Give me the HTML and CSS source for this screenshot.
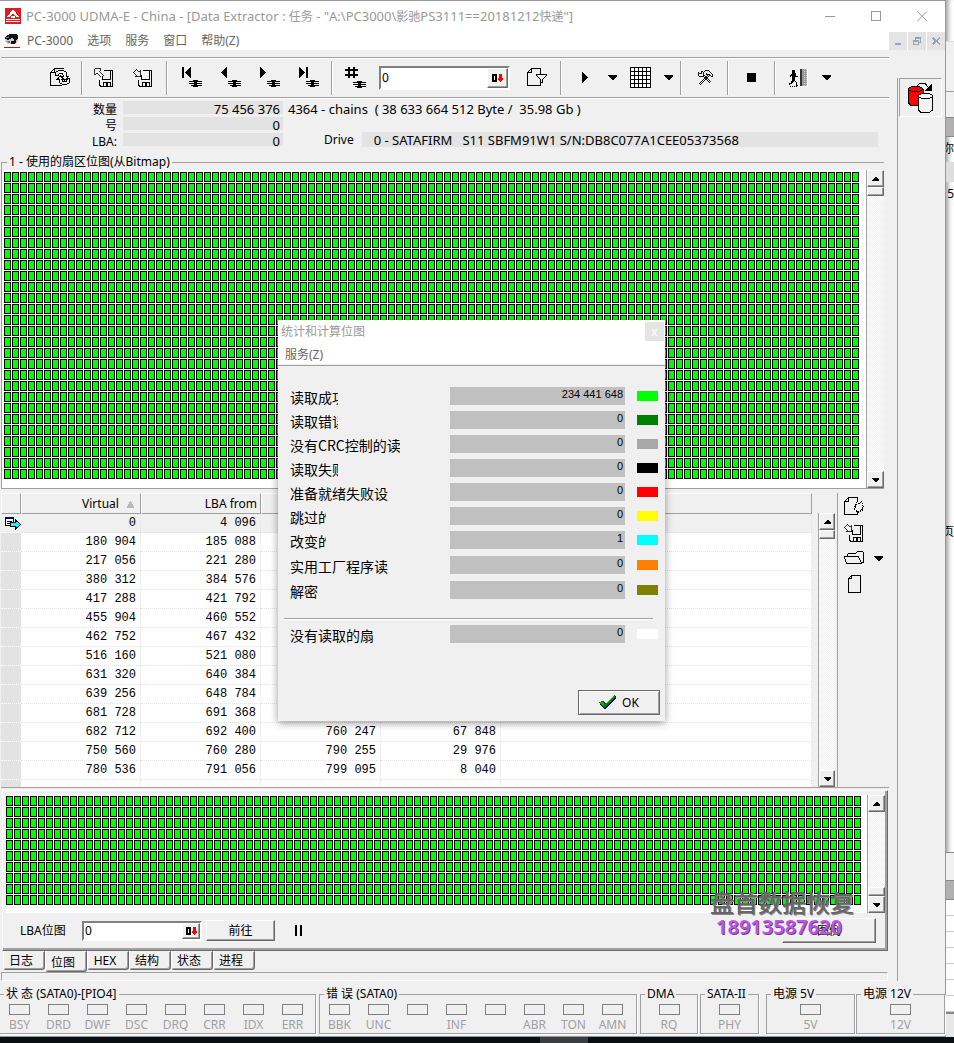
FILE: index.html
```html
<!DOCTYPE html>
<html lang="zh-CN">
<head>
<meta charset="utf-8">
<title>PC-3000 UDMA-E - Data Extractor</title>
<link rel="stylesheet" href="styles.css">
</head>
<body>
<svg class="defs" aria-hidden="true">
  <symbol id="floppy" viewBox="0 0 20 19"><path d="M5.500 11.500V17L7 18.500H18.500V2.500H10M8.500 7V11.500H16.500V3M9.500 18V14.500H16.500V18M12.500 15V18" fill="none" stroke="#000"/><path d="M13 15H14V18H13Z"/></symbol>
  <symbol id="menu-lines" viewBox="0 0 13 7"><path d="M0 1.500H13M0 3.500H13M2 5.500H13M4 .5H9M4 6.500H9" stroke="#000" fill="none"/><path d="M5 0H8V7H5Z"/></symbol>
  <symbol id="caret" viewBox="0 0 9 5"><path d="M0 0H9V1L5 5H4L0 1Z"/></symbol>
  <symbol id="up" viewBox="0 0 7 4"><path d="M3 0H4L7 3V4H0V3Z"/></symbol>
  <symbol id="down" viewBox="0 0 7 4"><path d="M3 4H4L7 1V0H0V1Z"/></symbol>
  <symbol id="dec" viewBox="0 0 11 8"><path d="M0 0H4L5 1V7L4 8H0ZM2 2V6H3V2Z" fill-rule="evenodd"/><path d="M7 0H10V4H11V5L9 8H8L6 5V4H7Z" fill="#f00"/></symbol>
  <symbol id="save-out" viewBox="0 0 20 19"><use href="#floppy" width="20" height="19"/><path d="M.5 .5H6.500L5.500 2.500L9.500 6.500L7.500 8.500L3.500 4.500L.5 6.500Z" fill="#f0f0f0" stroke="#000" stroke-width=".8"/></symbol>
  <symbol id="save-in" viewBox="0 0 20 19"><use href="#floppy" width="20" height="19"/><path d="M3 .5L6 3.500L7.500 2.500V8.500H2L3.500 6.500L.5 3.500Z" fill="#f0f0f0" stroke="#000" stroke-width=".8"/></symbol>
</svg>
<div class="screen">
<main class="window">
  <header class="titlebar">
    <svg class="app-icon" viewBox="0 0 16 16"><path d="M0 0H16V16H0Z" fill="#e01b22"/><path d="M8 1L14 9H11L8 5L5 9H2ZM6 8H10V10H6ZM1 11H15V12H1ZM1 13H15V14H1Z" fill="#fff"/></svg>
    <h1>PC-3000 UDMA-E - China - [Data Extractor : <small>任务</small> - "A:\PC3000\<small>影驰</small>PS3111==20181212<small>快递</small>"]</h1>
    <div class="window-buttons">
      <button aria-label="最小化"><svg viewBox="0 0 11 11"><path d="M0 5.500H10"/></svg></button>
      <button aria-label="最大化"><svg viewBox="0 0 11 11"><path d="M.5 .5H9.500V9.500H.5Z"/></svg></button>
      <button aria-label="关闭"><svg viewBox="0 0 11 11"><path d="M.5 .5L10 10M10 .5L.5 10" shape-rendering="auto"/></svg></button>
    </div>
  </header>
  <nav class="menubar">
    <svg class="doc-icon" viewBox="0 0 16 14"><path d="M3 1H13L14 2V7L12 10H4L1 8V3Z" fill="#ccc"/><path d="M1 3L4 1L6 0H12L14 1V5L11 6L8 4L4 6L1 5ZM7 7L12 6V9L9 10H7Z" fill="#111"/><path d="M2 3H5V4H2ZM3 7H6V9H4Z" fill="#777"/><path d="M0 13H16V14H0Z" fill="#e00"/></svg>
    <button>PC-3000</button><button>选项</button><button>服务</button><button>窗口</button><button>帮助(Z)</button>
    <div class="mdi-buttons">
      <button aria-label="最小化子窗口"><svg viewBox="0 0 10 10"><path d="M2 7H8V9H2Z"/></svg></button>
      <button aria-label="还原子窗口"><svg viewBox="0 0 10 10"><path d="M3 1H9V7H7V6H8V3H4V4H3ZM1 4H7V9H1ZM2 6V8H6V6Z" fill-rule="evenodd"/></svg></button>
      <button aria-label="关闭子窗口"><svg viewBox="0 0 10 10"><path d="M2 1L5 4L8 1L9 2L6.500 5L9 8L8 9L5 6L2 9L1 8L3.500 5L1 2Z"/></svg></button>
    </div>
  </nav>

  <div class="workspace">
    <div class="main">
      <div class="toolbar">
        <button class="tool" aria-label="刷新"><svg width="21" height="19" viewBox="0 0 21 19"><path d="M12 17.500H.5V4.500L4.500 .5H13.500M.5 4.500H4.500V.5M5.500 7.500V4.500L8.500 2.500H13.500L16.500 4.500V8.500H18.500L14.500 12.500L11 8.500H13.500L12.500 5.500H9.500L8 7.500ZM19.500 10.500V14.500L16.500 16.500H12.500L9.500 14.500V11.500H7L10.500 7.500L14 11.500H12L13 13.500H16L17.500 10.500Z" fill="none" stroke="#000"/></svg></button>
        <i class="sep tight"></i>
        <button class="tool" aria-label="导出"><svg width="20" height="19"><use href="#save-out"/></svg></button>
        <button class="tool" aria-label="保存"><svg width="20" height="19"><use href="#save-in"/></svg></button>
        <i class="sep wide"></i>
        <button class="tool" aria-label="第一个"><svg width="20" height="21" viewBox="0 0 20 21"><path d="M0 0H2V11H0ZM9 0V11L3 6V5Z"/><use href="#menu-lines" x="7" y="13" width="13" height="7"/></svg></button>
        <button class="tool" aria-label="上一个"><svg width="20" height="21" viewBox="0 0 20 21"><path d="M6 0V11L0 6V5Z"/><use href="#menu-lines" x="7" y="13" width="13" height="7"/></svg></button>
        <button class="tool" aria-label="下一个"><svg width="20" height="21" viewBox="0 0 20 21"><path d="M0 0L6 5V6L0 11Z"/><use href="#menu-lines" x="7" y="13" width="13" height="7"/></svg></button>
        <button class="tool" aria-label="最后一个"><svg width="20" height="21" viewBox="0 0 20 21"><path d="M0 0L6 5V6L0 11ZM7 0H9V11H7Z"/><use href="#menu-lines" x="7" y="13" width="13" height="7"/></svg></button>
        <i class="sep"></i>
        <button class="tool" aria-label="编号"><svg width="21" height="21" viewBox="0 0 21 21"><path d="M3 0H5V11H3ZM8 0H10V11H8ZM0 2H13V4H0ZM0 7H13V9H0Z"/><use href="#menu-lines" x="8" y="14" width="13" height="7"/></svg></button>
        <div class="number-box top-number"><input aria-label="编号" value="0"><button aria-label="十进制"><svg width="11" height="8"><use href="#dec"/></svg></button></div>
        <button class="tool" aria-label="过滤"><svg width="21" height="19" viewBox="0 0 21 19"><path d="M13.500 14V17.500H.5V4.500L4.500 .5H13.500V6M.5 4.500H4.500V.5M9.500 6.500H19.500V7.500L15.500 11.500V14.500H13.500V11.500L9.500 7.500Z" fill="none" stroke="#000"/></svg></button>
        <i class="sep"></i>
        <button class="tool" aria-label="开始"><svg width="6" height="11" viewBox="0 0 6 11"><path d="M0 0L6 5V6L0 11Z"/></svg></button>
        <button class="drop" aria-label="开始选项"><svg width="9" height="5"><use href="#caret"/></svg></button>
        <button class="tool" aria-label="网格"><svg width="21" height="21" viewBox="0 0 21 21"><path d="M0 0H21V21H0Z" fill="#fff"/><path d="M.5 .5H20.500V20.500H.5ZM4.500 0V21M8.500 0V21M12.500 0V21M16.500 0V21M0 4.500H21M0 8.500H21M0 12.500H21M0 16.500H21" fill="none" stroke="#000"/></svg></button>
        <button class="drop" aria-label="网格选项"><svg width="9" height="5"><use href="#caret"/></svg></button>
        <i class="sep"></i>
        <button class="tool" aria-label="工具"><svg width="16" height="15" viewBox="0 0 16 15"><path d="M1.500 13.500L11 3.500M2.500 14.500L12 4.500M5.500 6.500L13 13.500M6.500 5.500L14 12.500M7 1.500L9 .5H12L15.500 4V7L13 4.500H10L9.500 2.500M1 2.500V4.500L3 6.500H5L6.500 5V3L4.500 1L4 3.500H3Z" fill="none" stroke="#000" stroke-width=".9"/></svg></button>
        <i class="sep"></i>
        <button class="tool" aria-label="停止"><svg width="9" height="9" viewBox="0 0 9 9"><path d="M0 0H9V9H0Z"/></svg></button>
        <i class="sep"></i>
        <button class="tool" aria-label="退出"><svg width="20" height="18" viewBox="0 0 20 18"><path d="M3 1H6V4H7V7H9V8H6V11L8 14V16H9V17H7V14L5 12L3 15H1V16H0V14H2L3 10V7L1 8V6L3 4Z"/><path d="M1 17.500H9" stroke="#000" stroke-dasharray="1 1"/><path d="M11 0H18V17H11Z" fill="#999"/><path d="M11 0H13V17H11Z" fill="#333"/><path d="M15 0V17M17 0V17" stroke="#ccc" stroke-dasharray="1 1"/><path d="M18.500 0V17.500H11" stroke="#fff" fill="none"/></svg></button>
        <button class="drop" aria-label="退出选项"><svg width="9" height="5"><use href="#caret"/></svg></button>
      </div>

      <section class="info">
        <dl class="counts">
          <dt><small>数量</small></dt><dd>75 456 376</dd>
          <dt><small>号</small></dt><dd>0</dd>
          <dt><small>LBA:</small></dt><dd>0</dd>
        </dl>
        <div class="details">
          <p class="chains">4364 - chains&nbsp; ( 38 633 664 512 Byte /&nbsp; 35.98 Gb )</p>
          <p class="drive"><small>Drive</small><b>0 - SATAFIRM&nbsp;&nbsp; S11 SBFM91W1 S/N:DB8C077A1CEE05373568</b></p>
        </div>
      </section>

      <fieldset class="bitmap-group">
        <legend>1 - 使用的扇区位图(从Bitmap)</legend>
        <div class="bitmap-row">
          <div class="bitmap-area"><div class="cells tall"></div></div>
          <div class="vscroll"><button aria-label="上"><svg width="7" height="4"><use href="#up"/></svg></button><i class="thumb"></i><button class="end" aria-label="下"><svg width="7" height="4"><use href="#down"/></svg></button></div>
        </div>
      </fieldset>

      <section class="chain-list">
        <div class="table-wrap">
          <table>
            <colgroup><col class="c-mark"><col class="c-num"><col class="c-num"><col class="c-num"><col class="c-num"><col></colgroup>
            <thead><tr><th></th><th class="sorted">Virtual <svg width="7" height="7" viewBox="0 0 7 7"><path d="M3 0H4L7 6V7H0V6Z" fill="#b8b8b8"/></svg></th><th>LBA from</th><th></th><th></th><th></th></tr></thead>
            <tbody>
              <tr class="current"><td><svg width="16" height="13" viewBox="0 0 16 13"><path d="M.5 1.500H8.500V8.500H.5Z" fill="#fff" stroke="#000"/><path d="M0 0H9V2H0Z" fill="#00008b"/><path d="M2 4.500H7M2 6.500H5" stroke="#000"/><path d="M5.500 5.500H10.500V3L15.500 7.500L10.500 12V9.500H5.500Z" fill="#0ff" stroke="#000"/></svg></td><td>0</td><td>4 096</td><td></td><td></td><td></td></tr>
              <tr><td></td><td>180 904</td><td>185 088</td><td></td><td></td><td></td></tr>
              <tr><td></td><td>217 056</td><td>221 280</td><td></td><td></td><td></td></tr>
              <tr><td></td><td>380 312</td><td>384 576</td><td></td><td></td><td></td></tr>
              <tr><td></td><td>417 288</td><td>421 792</td><td></td><td></td><td></td></tr>
              <tr><td></td><td>455 904</td><td>460 552</td><td></td><td></td><td></td></tr>
              <tr><td></td><td>462 752</td><td>467 432</td><td></td><td></td><td></td></tr>
              <tr><td></td><td>516 160</td><td>521 080</td><td></td><td></td><td></td></tr>
              <tr><td></td><td>631 320</td><td>640 384</td><td></td><td></td><td></td></tr>
              <tr><td></td><td>639 256</td><td>648 784</td><td></td><td></td><td></td></tr>
              <tr><td></td><td>681 728</td><td>691 368</td><td></td><td></td><td></td></tr>
              <tr><td></td><td>682 712</td><td>692 400</td><td>760 247</td><td>67 848</td><td></td></tr>
              <tr><td></td><td>750 560</td><td>760 280</td><td>790 255</td><td>29 976</td><td></td></tr>
              <tr><td></td><td>780 536</td><td>791 056</td><td>799 095</td><td>8 040</td><td></td></tr>
              <tr class="partial"><td></td><td></td><td></td><td></td><td></td><td></td></tr>
            </tbody>
          </table>
        </div>
        <div class="table-scroll"><div class="vscroll"><button aria-label="上"><svg width="7" height="4"><use href="#up"/></svg></button><i class="thumb"></i><button class="end" aria-label="下"><svg width="7" height="4"><use href="#down"/></svg></button></div></div>
        <aside class="side-tools">
          <button aria-label="参数"><svg width="21" height="19" viewBox="0 0 21 19"><path d="M13.500 15V17.500H.5V4.500L4.500 .5H13.500V4M.5 4.500H4.500V.5" fill="none" stroke="#000"/><path d="M12.500 5.500L13.500 4.500L14.500 6.500H15.500L17.500 4.500L18.500 6.500L17.500 7.500L19.500 9.500V10.500L17.500 11.500L18.500 13.500L17.500 14.500L15.500 13.500L14.500 15.500H13.500L12.500 13.500L10.500 12.500L11.500 10.500L10.500 8.500L12.500 7.500Z" fill="#f0f0f0" stroke="#000" stroke-dasharray="2 1"/></svg></button>
          <button aria-label="保存链"><svg width="20" height="19"><use href="#save-in"/></svg></button>
          <button aria-label="打开"><svg width="20" height="14" viewBox="0 0 20 14"><path d="M2.500 12.500L.5 6.500V5.500H14.500L17.500 12.500ZM3.500 5V3.500L4.500 2.500H11.500L13.500 .5H18.500L19.500 1.500V11L17.500 12.500" fill="none" stroke="#000"/></svg></button><button class="side-drop" aria-label="打开选项"><svg width="9" height="5"><use href="#caret"/></svg></button>
          <button aria-label="新建"><svg width="13" height="18" viewBox="0 0 13 18"><path d="M.5 3.500L3.500 .5H12.500V17.500H.5ZM.5 3.500H3.500V.5" fill="none" stroke="#000"/></svg></button>
        </aside>
      </section>

      <section class="lower">
        <div class="bitmap-row">
          <div class="bitmap-area"><div class="cells short"></div></div>
          <div class="vscroll at-end"><button aria-label="上"><svg width="7" height="4"><use href="#up"/></svg></button><i class="thumb"></i><button class="end" aria-label="下"><svg width="7" height="4"><use href="#down"/></svg></button></div>
        </div>
        <div class="lower-controls">
          <label for="lba">LBA位图</label>
          <div class="number-box"><input id="lba" value="0"><button aria-label="十进制"><svg width="11" height="8"><use href="#dec"/></svg></button></div>
          <button class="push go">前往</button>
          <button class="pause" aria-label="暂停"><svg width="7" height="11" viewBox="0 0 7 11"><path d="M0 0H2V11H0ZM5 0H7V11H5Z"/></svg></button>
          <button class="push legend-button">图例</button>
        </div>
        <div class="watermark"><strong>盘首数据恢复</strong><span>18913587620</span></div>
      </section>
      <div class="tabs"><button>日志</button><button class="active">位图</button><button>HEX</button><button>结构</button><button>状态</button><button>进程</button></div>
      <div class="status-strip"></div>
    </div>
    <aside class="dock"><div class="dock-rail"><button aria-label="复制磁盘"><svg width="28" height="32" viewBox="0 0 28 32"><path d="M1.500 7V21L4 23.500H13L16 21V7Z" fill="#f00" stroke="#000"/><ellipse cx="8.500" cy="7" rx="7" ry="2.500" fill="#f00" stroke="#000"/><path d="M11.500 14V28L14 30.500H22L25.500 28V14Z" fill="#f4f4f4" stroke="#000"/><ellipse cx="18.500" cy="14" rx="7" ry="2.500" fill="#f4f4f4" stroke="#000"/><path d="M10 3.500L13 1.500H18L21 5" fill="none" stroke="#000"/><path d="M25 1V9H18Z"/></svg></button></div></aside>
  </div>

  <footer class="status">
    <fieldset class="g-state"><legend>状 态 (SATA0)-[PIO4]</legend><span><i></i>BSY</span><span><i></i>DRD</span><span><i></i>DWF</span><span><i></i>DSC</span><span><i></i>DRQ</span><span><i></i>CRR</span><span><i></i>IDX</span><span><i></i>ERR</span></fieldset>
    <fieldset class="g-error"><legend>错 误 (SATA0)</legend><span><i></i>BBK</span><span><i></i>UNC</span><span><i></i></span><span><i></i>INF</span><span><i></i></span><span><i></i>ABR</span><span><i></i>TON</span><span><i></i>AMN</span></fieldset>
    <fieldset class="g-dma"><legend>DMA</legend><span><i></i>RQ</span></fieldset>
    <fieldset class="g-sata"><legend>SATA-II</legend><span><i></i>PHY</span></fieldset>
    <fieldset class="g-5v"><legend>电源 5V</legend><span><i></i>5V</span></fieldset>
    <fieldset class="g-12v"><legend>电源 12V</legend><span><i></i>12V</span></fieldset>
  </footer>

  <section class="dialog" role="dialog" aria-labelledby="dlg-title">
    <header><h2 id="dlg-title">统计和计算位图</h2><button class="dialog-close" aria-label="关闭">x</button></header>
    <div class="dialog-menu"><button>服务(Z)</button></div>
    <dl class="stats">
      <div><dt class="w4">读取成功</dt><dd>234 441 648</dd><i class="read"></i></div>
      <div><dt class="w4">读取错误</dt><dd>0</dd><i class="error"></i></div>
      <div><dt class="w9">没有CRC控制的读取</dt><dd>0</dd><i class="nocrc"></i></div>
      <div><dt class="w4">读取失败</dt><dd>0</dd><i class="failed"></i></div>
      <div><dt>准备就绪失败设</dt><dd>0</dd><i class="notready"></i></div>
      <div><dt class="w3">跳过的</dt><dd>0</dd><i class="skipped"></i></div>
      <div><dt class="w3">改变的</dt><dd>1</dd><i class="changed"></i></div>
      <div><dt>实用工厂程序读</dt><dd>0</dd><i class="factory"></i></div>
      <div><dt>解密</dt><dd>0</dd><i class="decrypt"></i></div>
    </dl>
    <dl class="stats unread-row"><div><dt>没有读取的扇</dt><dd>0</dd><i class="unread"></i></div></dl>
    <button class="push ok"><svg width="18" height="15" viewBox="0 0 18 15"><path d="M1 8L4 6L7 9L15 1H17V3L7 14H5L1 10Z" fill="#000080"/><path d="M0 7L3 6L6 9L14 1L16 0V2L6 13L4 12L0 8Z" fill="#080"/><path d="M1 7L5 10M8 8L15 1" stroke="#0c0" fill="none"/></svg>OK</button>
  </section>
</main>
<aside class="behind">
  <i class="b1"></i><i class="b2"></i><i class="b3"></i><i class="b4"></i><span class="b5">你</span><i class="b6"></i><span class="b7">5</span><span class="b8">页</span><i class="b2 b9"></i><i class="b4"></i><i class="b10"></i><i class="b11"></i>
</aside>
<div class="taskbar"><i></i></div>
</div>
</body>
</html>
```

FILE: styles.css
```css
* { box-sizing: border-box; }
body { margin: 0; background: #f0f0f0; color: #000; font: 12px/16px "Noto Sans", "Noto Sans CJK SC", sans-serif; }
button, input { font: inherit; color: inherit; padding: 0; margin: 0; border: 0; background: none; border-radius: 0; }
h1, h2, p, dl, dd, dt { margin: 0; font-weight: normal; font-size: inherit; }
small { font-size: 12px; }
fieldset { margin: 0; padding: 0; min-width: 0; }
legend { padding: 0 2px; }
i { display: block; }
svg { display: block; flex: none; shape-rendering: crispEdges; }
.defs { position: absolute; width: 0; height: 0; }

.screen { display: grid; grid-template-columns: 1fr 8px; grid-template-rows: auto 6px; min-height: 100vh; }
.window { position: relative; display: flex; flex-direction: column; min-width: 0; background: #f0f0f0; border-top: 1px solid #999; border-right: 1px solid #999; border-bottom: 1px solid #999; }

.titlebar { display: flex; align-items: center; height: 30px; padding-left: 5px; background: #fff; color: #999; }
.app-icon { width: 16px; height: 16px; margin-right: 5px; }
.titlebar h1 { flex: 1; white-space: nowrap; font-size: 13px; }
.window-buttons { display: flex; }
.window-buttons button { display: grid; place-items: center; width: 46px; height: 30px; }
.window-buttons svg { width: 11px; height: 11px; fill: none; stroke: #999; }
.menubar { display: flex; align-items: center; height: 19px; padding: 1px 0 0 4px; background: #fff; color: #666; }
.doc-icon { width: 16px; height: 14px; margin-right: 7px; }
.menubar > button { margin-right: 14px; }
.mdi-buttons { display: flex; gap: 1px; margin-left: auto; align-self: flex-start; }
.mdi-buttons button { display: grid; place-items: center; width: 18px; height: 18px; background: #e4e4e4; }
.mdi-buttons svg { width: 10px; height: 10px; fill: #94a6b8; }

.workspace { display: flex; }
.main { flex: 1; min-width: 0; padding-top: 7px; }
.dock { width: 56px; padding: 28px 3px 0 8px; }
.dock-rail { height: 100%; border-left: 1px solid #a0a0a0; padding-left: 1px; }
.dock button { display: grid; place-items: center; width: 100%; height: 39px; border: 1px solid; border-color: #a0a0a0 #fff #fff #a0a0a0; }

.toolbar { display: flex; align-items: center; height: 41px; margin-left: 1px; padding-left: 40px; border-top: 1px solid #a0a0a0; border-bottom: 1px solid #a0a0a0; box-shadow: inset 0 1px #fff, 0 1px #fff; }
.tool, .drop { display: grid; place-items: center; height: 36px; }
.tool { width: 39px; }
.drop { width: 17px; }
.sep { width: 2px; height: 34px; margin: 0 3px; border-left: 1px solid #a0a0a0; background: #fff; }
.sep.tight { margin: 0 1px; }
.sep.wide { margin: 0 4px; }
.number-box { display: flex; align-items: stretch; width: 120px; height: 20px; background: #fff; border: 2px solid; border-color: #808080 #fff #fff #808080; }
.number-box input { flex: 1; min-width: 0; padding-left: 1px; outline: 0; }
.number-box button { display: grid; place-items: center; width: 18px; background: #f0f0f0; border: 1px solid; border-color: #fff #696969 #696969 #fff; box-shadow: inset -1px -1px #a0a0a0; }
.top-number { width: 131px; height: 24px; margin: 0 8px 0 4px; }
.top-number button { width: 21px; }

.info { display: flex; height: 57px; padding-top: 3px; font-size: 13px; }
.counts { display: grid; grid-template-columns: 117px 160px; gap: 3px 6px; grid-auto-rows: 13px; line-height: 16px; text-align: right; }
.counts dd { background: #e3e3e3; padding-right: 3px; }
.details { flex: 1; padding: 0 11px 0 5px; }
.chains { height: 31px; white-space: nowrap; }
.drive { display: flex; gap: 8px; padding-left: 36px; white-space: nowrap; }
.drive b { flex: 1; height: 15px; line-height: 17px; padding-left: 12px; background: #e3e3e3; font-weight: normal; }

.bitmap-group { margin: -1px 5px 0 1px; border: 1px solid #a0a0a0; border-bottom: 0; border-right: 0; }
.bitmap-group legend { margin-left: 5px; line-height: 16px; }
.bitmap-group .bitmap-row { border-bottom: 1px solid #a0a0a0; }
.bitmap-row { display: flex; }
.bitmap-area { display: flow-root; flex: 1; min-width: 0; background: #fff; }
.cells { background-color: #0f0; background-size: 8px 11px; background-image: linear-gradient(to right, transparent 7px, #fff 7px), linear-gradient(to bottom, transparent 10px, #fff 10px), linear-gradient(to right, #000 1px, transparent 1px, transparent 6px, #000 6px), linear-gradient(to bottom, #000 1px, transparent 1px, transparent 9px, #000 9px); }
.cells.tall { height: 308px; margin: 2px 7px 8px 2px; }
.cells.short { height: 110px; margin: 1px 6px 7px 0; }
.vscroll { display: flex; flex-direction: column; width: 18px; border-left: 1px solid #a0a0a0; background: repeating-conic-gradient(#fff 0 25%, #f0f0f0 0 50%) 0 0 / 2px 2px; }
.vscroll button { display: grid; place-items: center; height: 17px; }
.vscroll button, .thumb { background: #f0f0f0; border: 1px solid; border-color: #fff #696969 #696969 #fff; box-shadow: inset -1px -1px #a0a0a0; }
.thumb { height: 9px; }
.vscroll .end { margin-top: auto; }
.at-end .thumb { margin-top: auto; }
.at-end .end { margin-top: 0; }

.chain-list { display: flex; height: 295px; margin: 4px 0 0 1px; border-bottom: 1px solid #a0a0a0; }
.table-wrap { flex: 1; min-width: 0; overflow: hidden; }
table { width: 100%; table-layout: fixed; border-collapse: separate; border-spacing: 0; background: #fff; }
.c-mark { width: 20px; }
.c-num { width: 120px; }
th { height: 21px; padding: 0 3px; text-align: right; font-weight: normal; font-size: 12px; background: #f0f0f0; border: 1px solid; border-color: #fff #a0a0a0 #a0a0a0 #fff; }
.sorted { padding-right: 6px; }
.sorted svg { display: inline-block; margin-left: 5px; }
td { height: 19px; padding: 0 4px 0 0; text-align: right; font: 12px/18px "Liberation Mono", monospace; border-right: 1px dotted #e3e3e3; border-bottom: 1px dotted #e3e3e3; }
td:first-child { background: #e3e3e3; padding: 0 0 0 4px; border-right: 0; border-bottom-color: #fff; }
.current td, .current td:first-child { background: #f0f0f0; }
.partial td { height: 8px; border-bottom: 0; }
.table-scroll { display: flex; width: 26px; padding: 20px 2px 0 6px; border-right: 1px solid #a0a0a0; }
.side-tools { display: grid; grid-template-columns: 32px 16px; grid-auto-rows: 26px; align-content: start; width: 51px; }
.side-tools button { display: grid; place-items: center; grid-column: 1; }
.side-tools .side-drop { grid-column: 2; grid-row: 3; }

.lower { position: relative; margin: 2px 1px 0 2px; padding: 4px 2px 2px 4px; border: 1px solid; border-color: #fff #696969 #696969 #fff; box-shadow: inset -2px -2px #a0a0a0; }
.lower .bitmap-area { margin-left: -1px; }
.lower-controls { display: flex; align-items: center; height: 35px; padding: 0 9px 0 13px; }
.lower-controls label { width: 62px; }
.push { background: #f0f0f0; border: 1px solid; border-color: #fff #696969 #696969 #fff; box-shadow: inset -1px -1px #a0a0a0; }
.go { width: 69px; height: 21px; margin-left: 4px; }
.pause { display: grid; place-items: center; width: 46px; height: 22px; }
.legend-button { width: 94px; height: 25px; margin-left: auto; }
.watermark { position: absolute; right: 33px; bottom: 11px; display: grid; line-height: 24px; text-shadow: 1px 1px #888; }
.watermark strong { color: #666; font-size: 24px; font-weight: 500; }
.watermark span { padding-left: 6px; color: #c84cf4; font-size: 20px; font-weight: 600; text-shadow: 1px 1px #555; }

.tabs { display: flex; padding-left: 3px; height: 21px; }
.tabs button { width: 42px; height: 19px; padding: 1px 6px 0 0; border: 1px solid; border-color: transparent #696969 #696969 #fff; border-radius: 0 0 3px 3px; box-shadow: inset -1px -1px #a0a0a0; }
.tabs .active { height: 21px; padding-top: 3px; }
.status-strip { height: 9px; margin: 0 1px; border: 1px solid; border-color: #a0a0a0 #fff #fff #a0a0a0; }

.status { display: grid; grid-template-columns: 316fr 321fr 61fr 61fr 96fr 90fr; padding: 5px 0 1px; }
.status fieldset { display: flex; height: 48px; padding-top: 2px; border: 1px solid #a0a0a0; box-shadow: 1px 1px #fff; }
.status legend { margin-left: 4px; line-height: 16px; }
.status span { width: 39px; display: flex; flex-direction: column; align-items: center; color: #a0a0a0; white-space: nowrap; }
.status span i { width: 21px; height: 11px; border: 1px solid #808080; margin-bottom: 2px; }
.status .g-state { border-left: 0; }
.status .g-error, .status .g-dma { margin-left: 3px; }
.status .g-sata { margin-left: 2px; }
.status .g-5v { margin-left: 7px; }
.status .g-12v { margin-left: 1px; }
.g-dma, .g-sata, .g-5v, .g-12v { justify-content: center; }

.dialog { position: absolute; left: 278px; top: 319px; width: 387px; background: #f0f0f0; box-shadow: 0 2px 8px rgba(0,0,0,.4); padding-bottom: 6px; display: flex; flex-direction: column; }
.dialog header { display: flex; justify-content: space-between; height: 24px; padding-left: 3px; background: #fff; color: #999; line-height: 24px; }
.dialog-close { width: 19px; height: 19px; margin: 2px 1px 0 0; background: #e4e4e4; color: #fff; line-height: 16px; }
.dialog-menu { height: 20px; padding-left: 7px; background: #fff; color: #666; }
.dialog-menu button { line-height: 22px; }
.stats { display: grid; gap: 6px; padding: 21px 7px 19px 12px; }
.stats:not(.unread-row) { border-top: 1px solid #a0a0a0; margin-top: 1px; }
.stats div { display: grid; grid-template-columns: 160px 1fr 21px; height: 18px; }
.stats div:nth-child(n+8) { margin-top: 1px; }
.stats dt { width: 112px; height: 18px; overflow: hidden; font-size: 14px; line-height: 20px; font-family: "Noto Sans CJK SC", sans-serif; white-space: nowrap; }
.stats .w4 { width: 48px; }
.stats .w9 { width: 110px; }
.stats .w3 { width: 36px; }
.stats dd { height: 18px; margin-right: 12px; padding-right: 2px; background: #c0c0c0; text-align: right; font: 11px/14px "Liberation Sans", sans-serif; }
.stats i { height: 10px; margin-top: 4px; }
.read { background: #0f0; }
.error { background: #008000; }
.nocrc { background: #a8a8a8; }
.failed { background: #000; }
.notready { background: #f00; }
.skipped { background: #ff0; }
.changed { background: #0ff; }
.factory { background: #ff8000; }
.decrypt { background: #808000; }
.unread { background: #fff; }
.unread-row { margin: 0 12px 0 6px; padding: 6px 0 0 6px; border-top: 1px solid #a0a0a0; box-shadow: inset 0 1px #fff; }
.unread-row div { margin-right: -5px; }
.ok { display: flex; align-items: center; justify-content: center; gap: 5px; align-self: flex-end; width: 82px; height: 25px; margin: 47px 5px 0 0; border: 1px solid #696969; box-shadow: inset 1px 1px #fff, inset -1px -1px #a0a0a0; }

.behind { display: flex; flex-direction: column; overflow: hidden; background: #fff; line-height: 24px; box-shadow: inset 5px 0 5px -3px #999; }
.behind i, .behind span { flex: none; }
.b1 { height: 42px; border-bottom: 1px solid #ddd; }
.b2 { height: 50px; background: #f0f0f0; border-bottom: 1px solid #a0a0a0; }
.b3 { height: 25px; background: #f0f0f0; }
.b4 { height: 20px; background: #b0b0b0; border: 1px solid #888; border-width: 1px 0; }
.behind span { width: 8px; direction: rtl; overflow: hidden; white-space: nowrap; }
.b5 { height: 25px; }
.b6 { height: 20px; background: #ddd; }
.b7 { height: 338px; }
.b8 { height: 332px; }
.b9 { height: 28px; border-top: 1px solid #888; border-bottom: 0; }
.b10 { height: 112px; background: repeating-linear-gradient(to bottom, #fff 0 15px, #ccc 15px 16px); }
.behind .b11 { flex: 1; background: #e8e8e8; border-top: 2px solid #888; }
.taskbar { grid-column: 1 / -1; display: flex; justify-content: center; background: #080d12; }
.taskbar i { width: 48px; margin-left: 174px; background: #3a3d40; }
```
